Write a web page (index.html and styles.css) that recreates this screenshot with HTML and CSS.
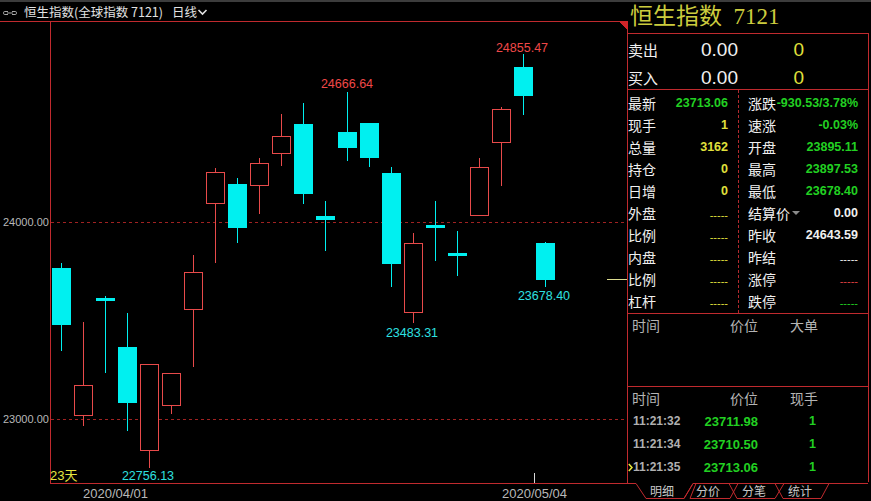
FILE: index.html
```html
<!DOCTYPE html>
<html lang="zh">
<head>
<meta charset="utf-8">
<title>恒生指数</title>
<link rel="stylesheet" href="styles.css">
</head>
<body>
<div class="app">
  <div class="left">
    <div class="topbar">
      <svg class="link-icon" width="20" height="19" viewBox="0 0 20 19">
        <path d="M8 9.5H4.8Q3.5 9.5 3.5 10.8V11.2Q3.5 12.5 4.8 12.5H8M12 9.5H15.2Q16.5 9.5 16.5 10.8V11.2Q16.5 12.5 15.2 12.5H12M7 11H13" fill="none" stroke="#a8a8a8" stroke-width="1"/>
      </svg>
      <span class="title">恒生指数(全球指数&nbsp;7121)</span>
      <span class="period">日线</span>
      <svg class="chev" width="12" height="19" viewBox="0 0 12 19">
        <polyline points="1.5,8 5.5,12 9.5,8" fill="none" stroke="#e0e0e0" stroke-width="1.6"/>
      </svg>
    </div>
    <svg class="chart" width="628" height="480" viewBox="0 21 628 480" shape-rendering="crispEdges">
      <line x1="0" y1="21.5" x2="627" y2="21.5" class="frame"/>
      <line x1="50.5" y1="21" x2="50.5" y2="483" class="frame"/>
      <line x1="627.5" y1="21" x2="627.5" y2="484" class="frame"/>
      <line x1="50" y1="483.5" x2="628" y2="483.5" class="frame"/>
      <polygon points="618,21 628,21 628,31" class="tri"/>
      <line x1="51" y1="222.5" x2="627" y2="222.5" class="grid"/>
      <line x1="51" y1="419.5" x2="627" y2="419.5" class="grid"/>
      <text x="3" y="226" class="axis">24000.00</text>
      <text x="3" y="423" class="axis">23000.00</text>
      <text x="83" y="498" class="date">2020/04/01</text>
      <text x="502" y="498" class="date">2020/05/04</text>
      <line x1="534.5" y1="473" x2="534.5" y2="483" class="tick"/>
      <text x="50" y="480" class="days">23天</text>
      <line x1="607" y1="279.5" x2="627" y2="279.5" class="last"/>

      <g class="up">
        <line x1="83.5" y1="322" x2="83.5" y2="426"/><rect x="74.5" y="385.5" width="18" height="30"/>
        <line x1="149.5" y1="364" x2="149.5" y2="468"/><rect x="140.5" y="364.5" width="18" height="86"/>
        <line x1="171.5" y1="373" x2="171.5" y2="414"/><rect x="162.5" y="373.5" width="18" height="32"/>
        <line x1="193.5" y1="255" x2="193.5" y2="367"/><rect x="184.5" y="272.5" width="18" height="37"/>
        <line x1="215.5" y1="168" x2="215.5" y2="263"/><rect x="206.5" y="172.5" width="18" height="31"/>
        <line x1="259.5" y1="158" x2="259.5" y2="214"/><rect x="250.5" y="163.5" width="18" height="22"/>
        <line x1="281.5" y1="114" x2="281.5" y2="166"/><rect x="272.5" y="136.5" width="18" height="17"/>
        <line x1="413.5" y1="233" x2="413.5" y2="323"/><rect x="404.5" y="243.5" width="18" height="69"/>
        <line x1="479.5" y1="158" x2="479.5" y2="216"/><rect x="470.5" y="167.5" width="18" height="48"/>
        <line x1="501.5" y1="107" x2="501.5" y2="186"/><rect x="492.5" y="109.5" width="18" height="33"/>
      </g>
      <g class="down">
        <line x1="61.5" y1="263" x2="61.5" y2="351"/><rect x="52" y="268" width="19" height="57"/>
        <line x1="105.5" y1="296" x2="105.5" y2="373"/><rect x="96" y="298" width="19" height="3"/>
        <line x1="127.5" y1="313" x2="127.5" y2="431"/><rect x="118" y="347" width="19" height="56"/>
        <line x1="237.5" y1="178" x2="237.5" y2="243"/><rect x="228" y="184" width="19" height="44"/>
        <line x1="303.5" y1="103" x2="303.5" y2="204"/><rect x="294" y="124" width="19" height="70"/>
        <line x1="325.5" y1="201" x2="325.5" y2="251"/><rect x="316" y="216" width="19" height="4"/>
        <line x1="347.5" y1="92" x2="347.5" y2="161"/><rect x="338" y="132" width="19" height="16"/>
        <line x1="369.5" y1="123" x2="369.5" y2="167"/><rect x="360" y="123" width="19" height="35"/>
        <line x1="391.5" y1="167" x2="391.5" y2="287"/><rect x="382" y="173" width="19" height="91"/>
        <line x1="435.5" y1="201" x2="435.5" y2="261"/><rect x="426" y="225" width="19" height="3"/>
        <line x1="457.5" y1="231" x2="457.5" y2="276"/><rect x="448" y="253" width="19" height="3"/>
        <line x1="523.5" y1="54" x2="523.5" y2="115"/><rect x="514" y="67" width="19" height="29"/>
        <line x1="545.5" y1="242" x2="545.5" y2="287"/><rect x="536" y="243" width="19" height="37"/>
      </g>

      <text x="347" y="88" class="hi">24666.64</text>
      <text x="522" y="52" class="hi">24855.47</text>
      <text x="412" y="337" class="lo">23483.31</text>
      <text x="148" y="480" class="lo">22756.13</text>
      <text x="544" y="300" class="lo">23678.40</text>
    </svg>
  </div>

  <div class="panel">
    <div class="ptitle">恒生指数&nbsp;&nbsp;7121</div>
    <div class="pbox">
      <div class="quote">
        <div class="qrow"><span class="qlabel">卖出</span><span class="qprice">0.00</span><span class="qvol">0</span></div>
        <div class="qrow"><span class="qlabel">买入</span><span class="qprice">0.00</span><span class="qvol">0</span></div>
      </div>
      <div class="stats">
        <div class="scol">
          <div class="srow"><span class="slabel">最新</span><span class="val green">23713.06</span></div>
          <div class="srow"><span class="slabel">现手</span><span class="val yellow">1</span></div>
          <div class="srow"><span class="slabel">总量</span><span class="val yellow">3162</span></div>
          <div class="srow"><span class="slabel">持仓</span><span class="val yellow">0</span></div>
          <div class="srow"><span class="slabel">日增</span><span class="val yellow">0</span></div>
          <div class="srow"><span class="slabel">外盘</span><span class="val dash yellow">-----</span></div>
          <div class="srow"><span class="slabel">比例</span><span class="val dash yellow">-----</span></div>
          <div class="srow"><span class="slabel">内盘</span><span class="val dash yellow">-----</span></div>
          <div class="srow"><span class="slabel">比例</span><span class="val dash yellow">-----</span></div>
          <div class="srow"><span class="slabel">杠杆</span><span class="val dash yellow">-----</span></div>
        </div>
        <div class="scol right">
          <div class="srow"><span class="slabel">涨跌</span><span class="val green">-930.53/3.78%</span></div>
          <div class="srow"><span class="slabel">速涨</span><span class="val green">-0.03%</span></div>
          <div class="srow"><span class="slabel">开盘</span><span class="val green">23895.11</span></div>
          <div class="srow"><span class="slabel">最高</span><span class="val green">23897.53</span></div>
          <div class="srow"><span class="slabel">最低</span><span class="val green">23678.40</span></div>
          <div class="srow"><span class="slabel">结算价<svg class="drop" width="10" height="8" viewBox="0 0 10 8"><polygon points="1,2 9,2 5,6" fill="#8a8a8a"/></svg></span><span class="val white">0.00</span></div>
          <div class="srow"><span class="slabel">昨收</span><span class="val white">24643.59</span></div>
          <div class="srow"><span class="slabel">昨结</span><span class="val dash white">-----</span></div>
          <div class="srow"><span class="slabel">涨停</span><span class="val dash red">-----</span></div>
          <div class="srow"><span class="slabel">跌停</span><span class="val dash green">-----</span></div>
        </div>
      </div>
      <div class="big">
        <div class="thead"><span>时间</span><span>价位</span><span>大单</span></div>
      </div>
      <div class="ticks">
        <div class="thead"><span>时间</span><span>价位</span><span>现手</span></div>
        <div class="trow"><span class="time"><i class="mark"></i>11:21:32</span><span class="tprice">23711.98</span><span class="tvol">1</span></div>
        <div class="trow"><span class="time"><i class="mark"></i>11:21:34</span><span class="tprice">23710.50</span><span class="tvol">1</span></div>
        <div class="trow"><span class="time"><i class="mark"><svg width="5" height="9" viewBox="0 0 5 9"><polyline points="0.8,1 4,4.5 0.8,8" fill="none" stroke="#e6e63c" stroke-width="1.6"/></svg></i>11:21:35</span><span class="tprice">23713.06</span><span class="tvol">1</span></div>
      </div>
    </div>
    <svg class="tabs" width="243" height="19" viewBox="628 482 243 19" shape-rendering="geometricPrecision">
      <polyline points="628,483.5 636,483.5 646,498.5 684,498.5 693,483.5" class="tabline"/>
      <polyline points="693,483.5 684,498.5" class="tabline"/>
      <polyline points="696,483.5 690,498.5 730,498.5 738,483.5 729,483.5" class="tabline"/>
      <polyline points="729,483.5 737,498.5 775,498.5 784,483.5" class="tabline"/>
      <polyline points="775,483.5 783,498.5 821,498.5 829,483.5 868,483.5" class="tabline"/>
      <polyline points="693,483.5 868,483.5" class="tabline"/>
      <text x="650" y="496" class="tabtxt">明细</text>
      <text x="696" y="496" class="tabtxt">分价</text>
      <text x="742" y="496" class="tabtxt">分笔</text>
      <text x="788" y="496" class="tabtxt">统计</text>
    </svg>
  </div>
</div>
</body>
</html>
```

FILE: styles.css
```css
html, body {
  margin: 0;
  padding: 0;
  background: #000;
}
body {
  width: 871px;
  height: 501px;
  overflow: hidden;
  font-family: "Liberation Sans", "Noto Sans CJK SC", sans-serif;
}
.app {
  display: flex;
  width: 871px;
  height: 501px;
  box-sizing: border-box;
  border-top: 2px solid #3c3c3c;
}
.left {
  width: 628px;
  flex: none;
  display: flex;
  flex-direction: column;
}
.topbar {
  height: 19px;
  display: flex;
  align-items: center;
  color: #e2e2e2;
  font-family: "Noto Sans CJK SC", sans-serif;
  font-size: 12.5px;
  line-height: 19px;
}
.link-icon { flex: none; margin-right: 4px; }
.title { margin-right: 9px; }
.chev { flex: none; }
.chart { display: block; }
.frame { stroke: #c02a2e; stroke-width: 1; }
.tri { fill: #d02428; }
.grid { stroke: #a02222; stroke-width: 1; stroke-dasharray: 3 3; }
.axis { fill: #b8b8b8; font-family: "Liberation Sans", sans-serif; font-size: 11px; }
.date { fill: #b8b8b8; font-family: "Liberation Sans", sans-serif; font-size: 13px; }
.tick { stroke: #d8d8d8; }
.days { fill: #e6e640; font-family: "Liberation Sans", "Noto Sans CJK SC", sans-serif; font-size: 13px; }
.last { stroke: #dcdc90; }
.up line { stroke: #e84a4a; stroke-width: 1; }
.up rect { fill: #000; stroke: #e84a4a; stroke-width: 1; }
.down line { stroke: #00f0f0; stroke-width: 1; }
.down rect { fill: #00f0f0; }
.hi { fill: #f04848; font-family: "Liberation Sans", sans-serif; font-size: 12.5px; text-anchor: middle; }
.lo { fill: #2ee0e0; font-family: "Liberation Sans", sans-serif; font-size: 12.5px; text-anchor: middle; }

.panel {
  width: 243px;
  flex: none;
  display: flex;
  flex-direction: column;
}
.ptitle {
  height: 31px;
  padding-left: 2px;
  color: #cccc3e;
  font-family: "Liberation Serif", "Noto Sans CJK SC", serif;
  font-size: 23px;
  line-height: 29px;
  white-space: nowrap;
}
.pbox {
  width: 241px;
  border-top: 1px solid #c02a2e;
  border-right: 1px solid #c02a2e;
  box-sizing: border-box;
}
.quote {
  padding-top: 5px;
  height: 50px;
  border-bottom: 1px solid #c02a2e;
  display: flex;
  flex-direction: column;
  gap: 6px;
}
.qrow {
  display: grid;
  grid-template-columns: 60px 50px 66px;
  height: 22px;
  line-height: 22px;
  align-items: center;
}
.qlabel {
  color: #f0f0f0;
  font-family: "Noto Sans CJK SC", sans-serif;
  font-size: 15px;
}
.qprice {
  color: #f0f0f0;
  font-size: 19px;
  text-align: right;
}
.qvol {
  color: #e0e03c;
  font-size: 19px;
  text-align: right;
}
.stats {
  display: grid;
  grid-template-columns: 110px 1fr;
  height: 223px;
  border-bottom: 1px solid #c02a2e;
}
.scol {
  padding-top: 2px;
}
.scol.right {
  border-left: 1px dashed #b02a2e;
  padding-left: 9px;
  padding-right: 10px;
}
.scol:first-child {
  padding-right: 10px;
}
.srow {
  display: flex;
  justify-content: space-between;
  align-items: center;
  height: 22px;
}
.slabel {
  color: #f0f0f0;
  font-family: "Noto Sans CJK SC", sans-serif;
  font-size: 14px;
  line-height: 22px;
  display: flex;
  align-items: center;
}
.drop { margin-left: 1px; }
.val {
  font-weight: bold;
  font-size: 12.5px;
}
.val.dash { font-size: 11px; font-weight: normal; padding-top: 4px; }
.green { color: #22d022; }
.yellow { color: #e0e03c; }
.white { color: #f0f0f0; }
.red { color: #e04040; }
.big {
  height: 72px;
  border-bottom: 1px solid #c02a2e;
}
.thead {
  display: grid;
  grid-template-columns: 70px 60px 60px;
  height: 22px;
  line-height: 22px;
  color: #b4b4b4;
  font-family: "Noto Sans CJK SC", sans-serif;
  font-size: 14px;
}
.thead span:first-child { padding-left: 4px; }
.thead span:nth-child(2), .thead span:nth-child(3) { text-align: right; }
.ticks {
  height: 95px;
}
.ticks .thead { margin-bottom: 1px; }
.trow {
  display: grid;
  grid-template-columns: 70px 60px 58px;
  height: 23px;
  line-height: 23px;
  font-weight: bold;
  font-size: 12.5px;
}
.time {
  color: #b0b0b0;
  display: flex;
  align-items: center;
  font-size: 12px;
}
.mark {
  display: inline-flex;
  width: 5px;
  height: 23px;
  align-items: center;
}
.tprice { color: #22d022; text-align: right; font-size: 13px; }
.tvol { color: #22d022; text-align: right; }
.tabs { display: block; }
.tabline { fill: none; stroke: #c02a2e; stroke-width: 1; }
.tabtxt { fill: #c8c8c8; font-family: "Noto Sans CJK SC", sans-serif; font-size: 12px; }
```
